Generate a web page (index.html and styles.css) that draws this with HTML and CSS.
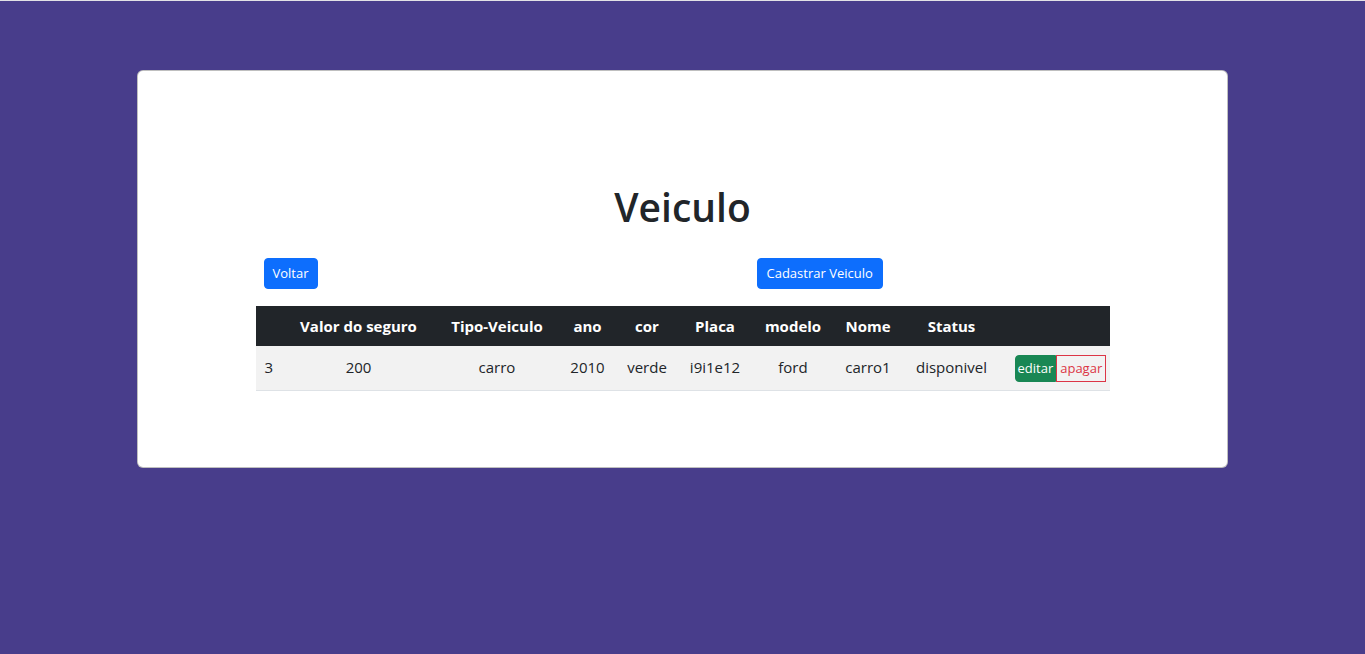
FILE: index.html
```html
<!DOCTYPE html>
<html lang="pt">
<head>
<meta charset="utf-8">
<title>Veiculo</title>
<link rel="stylesheet" href="styles.css">
</head>
<body>
<main class="card">
  <div class="inner">
    <h1 class="title">Veiculo</h1>
    <div class="toolbar">
      <div class="tool-left"><a class="btn btn-primary" href="#">Voltar</a></div>
      <div class="tool-right"><a class="btn btn-primary btn-wide" href="#">Cadastrar Veiculo</a></div>
    </div>
    <table class="table">
      <colgroup>
        <col class="c-id"><col class="c-valor"><col class="c-tipo"><col class="c-ano"><col class="c-cor"><col class="c-placa"><col class="c-modelo"><col class="c-nome"><col class="c-status"><col class="c-acoes">
      </colgroup>
      <thead>
        <tr>
          <th></th>
          <th>Valor do seguro</th>
          <th>Tipo-Veiculo</th>
          <th>ano</th>
          <th>cor</th>
          <th>Placa</th>
          <th>modelo</th>
          <th>Nome</th>
          <th>Status</th>
          <th></th>
        </tr>
      </thead>
      <tbody>
        <tr>
          <td class="id">3</td>
          <td>200</td>
          <td>carro</td>
          <td>2010</td>
          <td>verde</td>
          <td>i9i1e12</td>
          <td>ford</td>
          <td>carro1</td>
          <td>disponivel</td>
          <td class="acoes"><div class="btn-group"><a class="bt bt-edit" href="#">editar</a><a class="bt bt-del" href="#">apagar</a></div></td>
        </tr>
      </tbody>
    </table>
  </div>
</main>
</body>
</html>
```
FILE: styles.css
```css
* { box-sizing: border-box; }
html, body { margin: 0; padding: 0; }
body {
  background: #483d8b;
  border-top: 1px solid #e2e2e6;
  min-height: 654px;
  font-family: "Open Sans", "Noto Sans", sans-serif;
  font-size: 15px;
  color: #212529;
  padding-top: 69px;
}
.card {
  width: 1091px;
  height: 398px;
  margin: 0 auto;
  background: #fff;
  border: 1px solid rgba(0,0,0,0.25);
  border-radius: 6px;
  padding: 112px 0 0;
}
.inner {
  width: 854px;
  margin: 0 auto;
}
.title {
  margin: 0;
  text-align: center;
  font-size: 39px;
  line-height: 48px;
  font-weight: 600;
  color: #212529;
}
.toolbar {
  display: grid;
  grid-template-columns: 501px 1fr;
  margin-top: 27px;
}
.tool-left { padding-left: 8px; }
.btn {
  display: inline-block;
  font-size: 13px;
  line-height: 21px;
  padding: 4px 8px;
  border: 1px solid transparent;
  border-radius: 4px;
  text-decoration: none;
}
.btn-wide { padding: 4px 9px; }
.btn-primary { background: #0d6efd; border-color: #0d6efd; color: #fff; }
.table {
  margin-top: 17px;
  width: 854px;
  border-collapse: collapse;
  table-layout: fixed;
}
.c-id { width: 34px; }
.c-valor { width: 138px; }
.c-tipo { width: 139px; }
.c-ano { width: 42px; }
.c-cor { width: 77px; }
.c-placa { width: 59px; }
.c-modelo { width: 97px; }
.c-nome { width: 53px; }
.c-status { width: 114px; }
.c-acoes { width: 101px; }
.table th {
  background: #212529;
  color: #fff;
  font-weight: 700;
  height: 40px;
  padding: 0;
  text-align: center;
  line-height: 24px;
  white-space: nowrap;
}
.table td {
  background: #f2f2f2;
  height: 44px;
  padding: 0 0 1px;
  text-align: center;
  vertical-align: middle;
  line-height: 24px;
  border-bottom: 1px solid #dee2e6;
  white-space: nowrap;
}
.table td.id { text-align: left; padding-left: 9px; }
.table td.acoes { padding: 2px 0 0 6px; text-align: left; }
.btn-group { display: inline-flex; vertical-align: middle; }
.bt {
  display: inline-block;
  font-size: 13px;
  line-height: 21px;
  padding: 2px 3px;
  border: 1px solid transparent;
  text-decoration: none;
}
.bt-edit {
  background: #198754;
  border-color: #198754;
  color: #fff;
  border-radius: 4px 0 0 4px;
  padding: 2px 2px;
}
.bt-del {
  background: transparent;
  border-color: #dc3545;
  color: #dc3545;
  border-radius: 0;
}
```
